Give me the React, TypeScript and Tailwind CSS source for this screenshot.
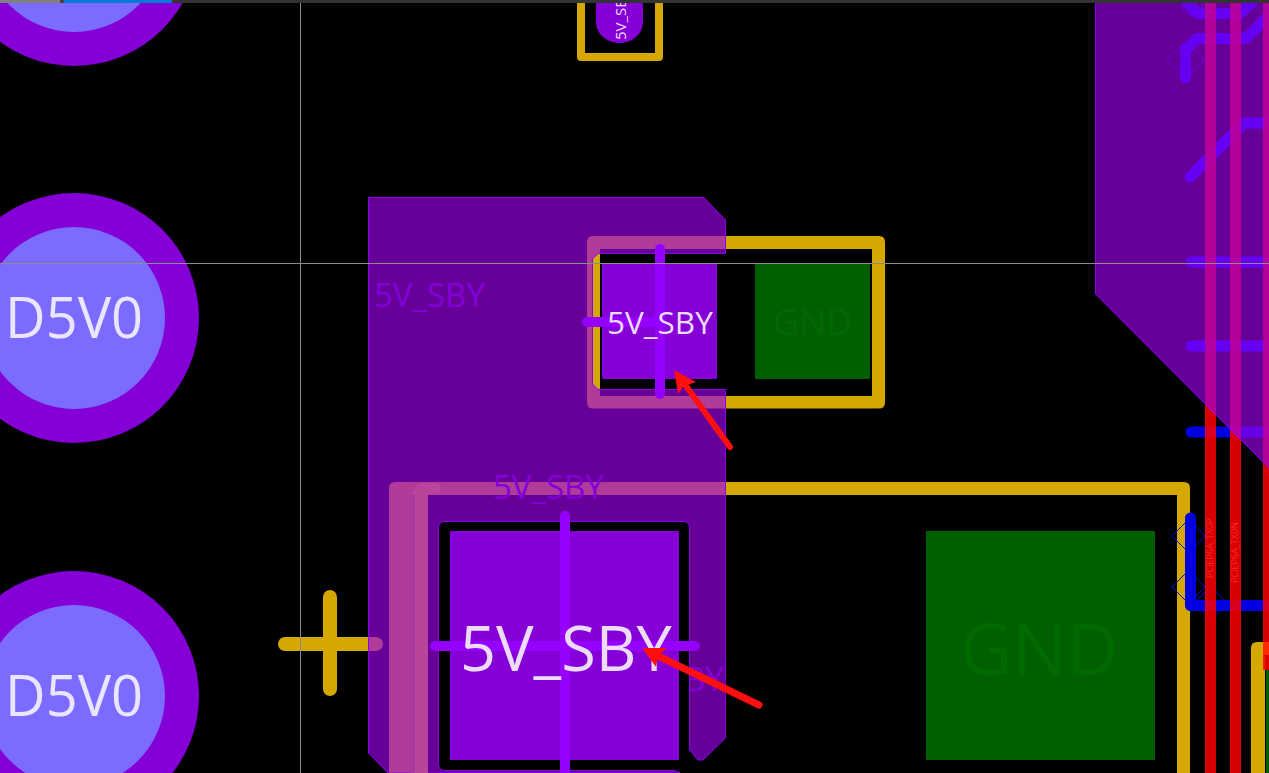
const font = "[font-family:'Open_Sans','Noto_Sans',sans-serif]";

function PcbLayer() {
  return (
    <svg className="absolute inset-0 h-full w-full" viewBox="0 3 1269 770" fill="none">
      {/* thru hole pads */}
      {[-59, 318, 696].map((cy) => (
        <g key={cy}>
          <circle cx={74} cy={cy} r={125} fill="#8400d6" />
          <circle cx={74} cy={cy} r={91} fill="#7b6cff" />
        </g>
      ))}

      {/* silkscreen */}
      <g fill="#d4a800">
        <path
          fillRule="evenodd"
          d="M593 236H879Q885 236 885 242V402.500Q885 408.500 879 408.500H593Q587 408.500 587 402.500V242Q587 236 593 236ZM600 249V396H872V249Z"
        />
        <path d="M395 482H1184Q1190 482 1190 488V773H1177V495H415V773H389V488Q389 482 395 482Z" />
        <path d="M1251 773V648Q1251 642 1257 642H1269V655H1265V773Z" />
        <path d="M577 0V57Q577 61 581 61H659Q663 61 663 57V0H655V53H585V0Z" />
      </g>
      <path d="M285 644H376M330 597V689" stroke="#d4a800" strokeWidth={14} strokeLinecap="round" />

      {/* smd pads */}
      <rect x={602} y={264} width={115} height={115} fill="#8500d6" />
      <rect x={755} y={264} width={115} height={115} fill="#005f00" />
      <rect x={450} y={531} width={229} height={229} fill="#8500d6" />
      <rect x={926} y={531} width={229} height={229} fill="#005f00" />
      <path d="M596 -5H643V22C643 34 632 43 620 43C607 43 596 34 596 22Z" fill="#8500d6" />
      <rect x={1266} y={670} width={3} height={103} fill="#005f00" />

      {/* blue tracks */}
      <g stroke="#0000ff" strokeWidth={11} strokeLinecap="round" strokeLinejoin="round">
        <path d="M1183 -2L1198 13.500H1240L1254 0" />
        <path d="M1185.500 78V50L1197 38.500H1246L1275 9" />
        <path d="M1190 177L1244 123H1275" />
        <path d="M1191 262H1275" />
        <path d="M1191 346H1275" />
      </g>
      <g stroke="#0000e0" strokeWidth={11} strokeLinecap="round" strokeLinejoin="round">
        <path d="M1191 432H1275" />
        <path d="M1190.500 518V605.500H1275" />
      </g>
      <g stroke="#0000ff" strokeWidth={1}>
        <path d="M1186 41L1205 60L1186 79L1167 60Z" />
        <path d="M1183 3V10L1192 16M1202 3V8" />
      </g>
      <g stroke="#0000e0" strokeWidth={1}>
        <path d="M1189 519L1205 536L1189 553L1172 536Z" />
        <path d="M1189 570L1205 587L1189 604L1172 587Z" />
        <path d="M1211 586L1227 603L1211 620L1194 603Z" />
      </g>

      {/* red tracks */}
      <g fill="#ff0000" fillOpacity={0.86}>
        <rect x={1205} y={3} width={11} height={770} />
        <rect x={1230} y={3} width={11} height={770} />
        <rect x={1263} y={3} width={6} height={639} />
        <rect x={1263} y={655} width={6} height={15} />
      </g>
      <rect x={1263} y={642} width={6} height={13} fill="#ff2a00" />

      {/* copper pours */}
      <path
        fillRule="evenodd"
        fill="#9d00eb"
        fillOpacity={0.65}
        stroke="#8c00f0"
        strokeWidth={1}
        d="M368.500 197.500H704L725.500 220V253.500H598L592.500 259V384L598 389.500H725.500V738L703 760H698L689.500 750V528Q689.500 521.500 683 521.500H445Q438.500 521.500 438.500 528V764Q438.500 770.500 445 770.500H675L680 773H388L368.500 753Z"
      />
      <path
        fill="#9d00eb"
        fillOpacity={0.65}
        stroke="#8c00f0"
        strokeWidth={1}
        d="M1095.500 0V294L1272 471V0Z"
      />

      {/* second silk outline over the pour */}
      <path
        fill="#ba449c"
        d="M410 495L418 484Q419 483 421 483H435C442.500 483 442.500 494 435 494H428V773H415V495Z"
      />
      <rect x={410} y={495} width={5} height={278} fill="#a8389e" />

      {/* bright pad tracks */}
      <g stroke="#9600ff" strokeWidth={10} strokeLinecap="round">
        <path d="M660 249V394" />
        <path d="M587 322H660" />
        <path d="M565 516V780" />
        <path d="M435 646H695" />
      </g>
    </svg>
  );
}

export default function App() {
  return (
    <div className="flex h-[773px] w-[1269px] flex-col overflow-hidden bg-black">
      <div className="flex h-[3px] shrink-0 bg-[#333333]">
        <div className="w-[60px] bg-[#808080]" />
        <div className="w-[4px] bg-[#444444]" />
        <div className="w-[108px] bg-[#0078d7]" />
      </div>

      <div className={`relative h-[770px] overflow-hidden ${font}`}>
        <PcbLayer />

        {/* net labels */}
        <span className="absolute left-[5px] top-[273px] text-[56px] leading-[80px] whitespace-nowrap text-[#ebe6ff]">D5V0</span>
        <span className="absolute left-[5px] top-[651px] text-[56px] leading-[80px] whitespace-nowrap text-[#ebe6ff]">D5V0</span>

        <span className="absolute left-[374px] top-[270px] text-[33px] leading-[44px] whitespace-nowrap text-[#8400d8]">5V_SBY</span>
        <span className="absolute left-[493px] top-[462px] text-[33px] leading-[44px] whitespace-nowrap text-[#8400d8]">5V_SBY</span>
        <span className="absolute left-[684px] top-[654px] text-[33px] leading-[44px] whitespace-nowrap text-[#8400d8] [clip-path:inset(0_0_0_6px)]">BY</span>

        <span className="absolute left-[607px] top-[297px] text-[31.500px] leading-[44px] whitespace-nowrap text-[#ecdcfa]">5V_SBY</span>
        <span className="absolute left-[773px] top-[297px] text-[36px] leading-[44px] whitespace-nowrap text-[#006a00]">GND</span>
        <span className="absolute left-[460px] top-[600px] text-[63px] leading-[88px] whitespace-nowrap text-[#ecdcfa]">5V_SBY</span>
        <span className="absolute left-[960px] top-[600px] text-[72px] leading-[88px] whitespace-nowrap text-[#006a00]">GND</span>

        {/* rotated labels */}
        <span className="absolute left-[610px] top-[37px] origin-top-left -rotate-90 text-[15px] leading-[20px] whitespace-nowrap text-[#ecdcfa]">5V_SBY</span>
        <span className="absolute left-[1205px] top-[575px] origin-top-left -rotate-90 text-[9px] leading-[10px] whitespace-nowrap text-[#f42a2a]">PCIEP6A_TX0P</span>
        <span className="absolute left-[1230px] top-[580px] origin-top-left -rotate-90 text-[9px] leading-[10px] whitespace-nowrap text-[#f42a2a]">PCIEP6A_TX0N</span>

        {/* annotation arrows */}
        <svg className="absolute inset-0 h-full w-full" viewBox="0 3 1269 770" fill="none">
          <path d="M730 447L681 379" stroke="#ff0f0f" strokeWidth={6} strokeLinecap="round" />
          <path d="M674 370L696 382L684 386L678 394Z" fill="#ff0f0f" />
          <path d="M759 705L652 653" stroke="#ff0f0f" strokeWidth={7} strokeLinecap="round" />
          <path d="M642 648L667 648L658 656L656 667Z" fill="#ff0f0f" />
        </svg>

        {/* cursor crosshair */}
        <div className="absolute bottom-0 left-[300px] top-0 w-px bg-[#8c8c8c]" />
        <div className="absolute left-0 right-0 top-[260px] h-px bg-[#8c8c8c]" />
      </div>
    </div>
  );
}
